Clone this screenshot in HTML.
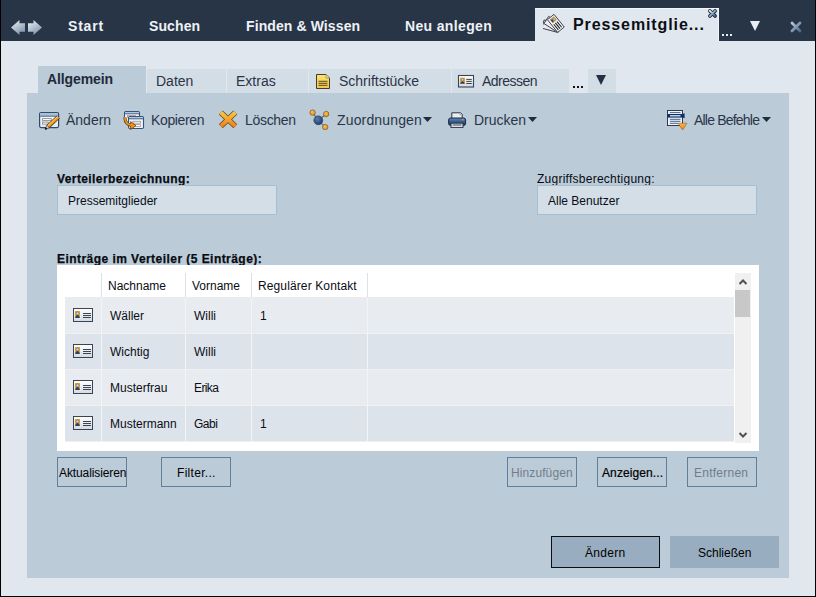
<!DOCTYPE html>
<html><head><meta charset="utf-8">
<style>
*{box-sizing:border-box;margin:0;padding:0}
html,body{width:816px;height:597px;overflow:hidden}
body{position:relative;background:#e1e7ee;font-family:"Liberation Sans",sans-serif;color:#1c2230}
.a{position:absolute;white-space:pre;line-height:1}
</style></head><body>
<div class="a" style="left:0px;top:0px;width:816px;height:41px;background:#283546;"></div>
<div class="a" style="left:0px;top:0px;width:1px;height:597px;background:#000;"></div>
<div class="a" style="left:815px;top:0px;width:1px;height:597px;background:#000;"></div>
<div class="a" style="left:0px;top:596px;width:816px;height:1px;background:#000;"></div>
<svg class="a" style="left:9px;top:18px" width="36" height="20" viewBox="0 0 36 20">
<defs><linearGradient id="ga" x1="0" y1="0" x2="0.6" y2="1"><stop offset="0" stop-color="#f2f5f9"/><stop offset="1" stop-color="#7f95ae"/></linearGradient></defs>
<path d="M2,9.5 L10.5,2 L10.5,5.2 L16,5.2 L16,13.8 L10.5,13.8 L10.5,17 Z" fill="url(#ga)"/>
<path d="M19,5.2 L24.5,5.2 L24.5,2 L33,9.5 L24.5,17 L24.5,13.8 L19,13.8 Z" fill="url(#ga)"/>
</svg>
<div class="a" style="left:68px;top:19px;font-size:14px;color:#eef2f7;font-weight:700;letter-spacing:0.8px">Start</div>
<div class="a" style="left:149px;top:19px;font-size:14px;color:#eef2f7;font-weight:700;letter-spacing:0.1px">Suchen</div>
<div class="a" style="left:246px;top:19px;font-size:14px;color:#eef2f7;font-weight:700;letter-spacing:0.1px">Finden &amp; Wissen</div>
<div class="a" style="left:405px;top:19px;font-size:14px;color:#eef2f7;font-weight:700;letter-spacing:0.35px">Neu anlegen</div>
<div class="a" style="left:535px;top:8px;width:184px;height:33px;background:#e1e7ee;border-top:1px solid #f3f6f9;border-right:1px solid #f3f6f9"></div>
<svg class="a" style="left:543px;top:12px" width="24" height="24" viewBox="0 0 24 24">
<g stroke="#3a3f48" stroke-width="0.9" stroke-linejoin="round">
<g transform="translate(14.7,20.4) rotate(-36) translate(-14.7,-20.4)"><rect x="0" y="-8.5" width="16.3" height="8.5" transform="translate(4.4,7.7) rotate(51)" fill="#e8ebef"/></g>
<g transform="translate(14.7,20.4) rotate(-18) translate(-14.7,-20.4)"><rect x="0" y="-8.5" width="16.3" height="8.5" transform="translate(4.4,7.7) rotate(51)" fill="#eceef2"/></g>
<rect x="0" y="-8.5" width="16.3" height="8.5" transform="translate(4.4,7.7) rotate(51)" fill="#f2f3f6"/>
</g>
<g transform="translate(4.4,7.7) rotate(51)">
<rect x="1.3" y="-7.2" width="5" height="5.2" fill="#f0a020"/>
<path d="M1.8,-2.2 Q2.2,-4.6 3.8,-4.6 Q5.4,-4.6 5.8,-2.2 Z" fill="#24508c"/><circle cx="3.8" cy="-5.6" r="1.2" fill="#d0dcea" stroke="#2a5aa0" stroke-width="0.5"/>
<path d="M7.5,-6.3 H14.8 M7.5,-4.2 H14.8 M7.5,-2.1 H14.8" stroke="#1e2228" stroke-width="1.05"/>
</g>
</svg>
<div class="a" style="left:573px;top:17px;font-size:16px;color:#0c0f14;font-weight:700;letter-spacing:0.9px">Pressemitglie...</div>
<svg class="a" style="left:707px;top:8px" width="11" height="11" viewBox="0 0 11 11">
<defs><linearGradient id="gx" x1="0" y1="0" x2="1" y2="1"><stop offset="0" stop-color="#f4f7fb"/><stop offset="1" stop-color="#2e5f99"/></linearGradient></defs>
<path d="M2.9,2.9 L8.1,8.1 M8.1,2.9 L2.9,8.1" stroke="#1a2230" stroke-width="3.6" stroke-linecap="round"/>
<path d="M2.9,2.9 L8.1,8.1 M8.1,2.9 L2.9,8.1" stroke="url(#gx)" stroke-width="2" stroke-linecap="round"/>
</svg>
<div class="a" style="left:722px;top:34px;width:2px;height:2px;background:#e6ecf2;"></div>
<div class="a" style="left:726px;top:34px;width:2px;height:2px;background:#e6ecf2;"></div>
<div class="a" style="left:730px;top:34px;width:2px;height:2px;background:#e6ecf2;"></div>
<svg class="a" style="left:749px;top:20px" width="12" height="12" viewBox="0 0 12 12"><path d="M1,1 L11,1 L6,11 Z" fill="#e8eef5"/></svg>
<svg class="a" style="left:789px;top:20px" width="14" height="14" viewBox="0 0 14 14">
<defs><linearGradient id="gx2" x1="0" y1="0" x2="1" y2="1"><stop offset="0" stop-color="#b8c6d6"/><stop offset="1" stop-color="#4d6c8e"/></linearGradient></defs>
<path d="M3,3 L11,11 M11,3 L3,11" stroke="url(#gx2)" stroke-width="2.8" stroke-linecap="round"/>
</svg>
<div class="a" style="left:146px;top:68px;width:81px;height:25px;background:#d3dde6;border:1px solid #e0e7ee;border-bottom:none"></div>
<div class="a" style="left:226px;top:68px;width:83px;height:25px;background:#d3dde6;border:1px solid #e0e7ee;border-bottom:none"></div>
<div class="a" style="left:308px;top:68px;width:144px;height:25px;background:#d3dde6;border:1px solid #e0e7ee;border-bottom:none"></div>
<div class="a" style="left:451px;top:68px;width:119px;height:25px;background:#d3dde6;border:1px solid #e0e7ee;border-bottom:none"></div>
<div class="a" style="left:587px;top:68px;width:30px;height:25px;background:#d3dde6;border:1px solid #e0e7ee;border-bottom:none"></div>
<div class="a" style="left:38px;top:66px;width:108px;height:27px;background:#bbcbd8;"></div>
<div class="a" style="left:47px;top:72px;font-size:14px;color:#212a3b;font-weight:700;letter-spacing:-0.1px">Allgemein</div>
<div class="a" style="left:156px;top:74px;font-size:14px;color:#2a3446">Daten</div>
<div class="a" style="left:236px;top:74px;font-size:14px;color:#2a3446">Extras</div>
<svg class="a" style="left:315px;top:73px" width="16" height="17" viewBox="0 0 16 17">
<defs><linearGradient id="gd" x1="0" y1="0" x2="0" y2="1"><stop offset="0" stop-color="#fbe36a"/><stop offset="1" stop-color="#f2c64a"/></linearGradient></defs>
<path d="M1.5,1.5 L11,1.5 L14.5,5 L14.5,15.5 L1.5,15.5 Z" fill="url(#gd)" stroke="#3d3d3d" stroke-width="1"/>
<path d="M11,1.5 L11,5 L14.5,5" fill="#e8dca0" stroke="#9a8a50" stroke-width="0.8"/>
<path d="M3.5,8.3 H12.5 M3.5,10.3 H12.5 M3.5,12.3 H12.5" stroke="#5a4a20" stroke-width="1"/>
</svg>
<div class="a" style="left:339px;top:74px;font-size:14px;color:#2a3446">Schriftstücke</div>
<svg class="a" style="left:457px;top:74px" width="18" height="14" viewBox="0 0 18 14">
<defs><linearGradient id="gct" x1="0" y1="0" x2="0" y2="1"><stop offset="0" stop-color="#ffffff"/><stop offset="1" stop-color="#d0d8e2"/></linearGradient></defs>
<rect x="1.5" y="1.5" width="15" height="11.5" fill="url(#gct)" stroke="#3a4453" stroke-width="1.1"/>
<rect x="3" y="3.7" width="5" height="6" fill="#f4a11e"/>
<path d="M3.2,9.7 Q3.6,7.2 5.5,7.2 Q7.4,7.2 7.8,9.7 Z" fill="#24456f"/><circle cx="5.5" cy="5.8" r="1.3" fill="#c9d6e4" stroke="#35557a" stroke-width="0.5"/>
<path d="M9.3,5.4 H14.8 M9.3,7.4 H14.8 M9.3,9.5 H14.8" stroke="#3a4453" stroke-width="1"/>
</svg>
<div class="a" style="left:482px;top:74px;font-size:14px;color:#2a3446;letter-spacing:-0.5px">Adressen</div>
<div class="a" style="left:573px;top:86px;width:2px;height:2px;background:#111;"></div>
<div class="a" style="left:577px;top:86px;width:2px;height:2px;background:#111;"></div>
<div class="a" style="left:581px;top:86px;width:2px;height:2px;background:#111;"></div>
<svg class="a" style="left:595px;top:74px" width="12" height="12" viewBox="0 0 12 12"><path d="M1,1 L11,1 L6,11 Z" fill="#253042"/></svg>
<div class="a" style="left:27px;top:93px;width:762px;height:485px;background:#bbcbd8;"></div>
<svg class="a" style="left:38px;top:111px" width="22" height="20" viewBox="0 0 22 20">
<defs><linearGradient id="gw" x1="0" y1="0" x2="0" y2="1"><stop offset="0" stop-color="#ffffff"/><stop offset="1" stop-color="#e4e6ee"/></linearGradient></defs>
<rect x="1.6" y="1.6" width="19" height="15" rx="1.5" fill="url(#gw)" stroke="#2d4a72" stroke-width="1.2"/>
<rect x="2.2" y="2.2" width="17.8" height="2.6" fill="#a8bfd8"/>
<path d="M2.2,5.2 H20.2" stroke="#2d4a72" stroke-width="0.9"/>
<rect x="4.6" y="7.6" width="8.6" height="2" fill="#fff" stroke="#8c8c8c" stroke-width="0.9"/>
<rect x="4.6" y="11.1" width="5.6" height="2" fill="#fff" stroke="#8c8c8c" stroke-width="0.9"/>
<path d="M10,15.6 L20.3,6" stroke="#4a3a20" stroke-width="4.2"/>
<path d="M10,15.6 L20.3,6" stroke="#f39c1f" stroke-width="2.8"/>
<path d="M9.5,14.9 L19.7,5.4" stroke="#ffd98a" stroke-width="0.9"/>
<path d="M7.2,18.3 L11.3,16.9 L8.7,14.1 Z" fill="#ddd2b8" stroke="#4a3a20" stroke-width="0.6"/>
<circle cx="7.9" cy="17.6" r="1.1" fill="#111"/>
</svg>
<div class="a" style="left:66px;top:113px;font-size:14px;color:#2b3548">Ändern</div>
<svg class="a" style="left:122px;top:109px" width="23" height="22" viewBox="0 0 23 22">
<rect x="2.5" y="2.5" width="15" height="11" rx="1.2" fill="#f6f6fa" stroke="#35557c" stroke-width="1.1"/>
<rect x="3" y="3" width="14" height="1.6" fill="#b4c6dc"/><path d="M2.5,4.8 H17.5" stroke="#35557c" stroke-width="0.9"/>
<rect x="5.5" y="6.5" width="8" height="1.8" fill="#fff" stroke="#999" stroke-width="0.8"/>
<rect x="6.5" y="7.5" width="15" height="12" rx="1.2" fill="#f2f2f6" stroke="#35557c" stroke-width="1.1"/>
<rect x="7" y="8" width="14" height="1.6" fill="#b4c6dc"/><path d="M6.5,9.8 H21.5" stroke="#35557c" stroke-width="0.9"/>
<rect x="11" y="12.3" width="7.5" height="1.8" fill="#fff" stroke="#999" stroke-width="0.8"/>
<rect x="11" y="15.6" width="7.5" height="1.8" fill="#fff" stroke="#999" stroke-width="0.8"/>
<path d="M2.8,8.3 Q3.3,15.6 9.6,16.4" fill="none" stroke="#5a3a10" stroke-width="3"/>
<path d="M8.6,12.6 L14,16.6 L8.6,20.6 Z" fill="#f0901c" stroke="#5a3a10" stroke-width="0.7"/>
<path d="M2.8,8.3 Q3.3,15.6 9.6,16.4" fill="none" stroke="#f0901c" stroke-width="1.8"/>
</svg>
<div class="a" style="left:151px;top:113px;font-size:14px;color:#2b3548;letter-spacing:-0.35px">Kopieren</div>
<svg class="a" style="left:217px;top:109px" width="22" height="21" viewBox="0 0 22 21">
<defs><linearGradient id="go" x1="0" y1="0" x2="0" y2="1"><stop offset="0" stop-color="#f8c445"/><stop offset="1" stop-color="#ee8418"/></linearGradient></defs>
<path d="M3.8,3.5 L18.3,17.2 M18.3,3.5 L3.8,17.2" stroke="#5a4428" stroke-width="5.6"/>
<path d="M3.8,3.5 L18.3,17.2 M18.3,3.5 L3.8,17.2" stroke="url(#go)" stroke-width="4.2"/>
</svg>
<div class="a" style="left:245px;top:113px;font-size:14px;color:#2b3548;letter-spacing:-0.3px">Löschen</div>
<svg class="a" style="left:308px;top:108px" width="22" height="22" viewBox="0 0 22 22">
<defs><radialGradient id="gb" cx="0.4" cy="0.35" r="0.7"><stop offset="0" stop-color="#5a80b0"/><stop offset="1" stop-color="#143868"/></radialGradient>
<radialGradient id="gor" cx="0.4" cy="0.35" r="0.7"><stop offset="0" stop-color="#ffc040"/><stop offset="1" stop-color="#ee8a18"/></radialGradient></defs>
<path d="M4.6,4.6 L10.3,12.3 L18.2,6 M10.3,12.3 L17.2,19.1" fill="none" stroke="#5f6e7c" stroke-width="1.3"/>
<circle cx="10.3" cy="12.3" r="4.4" fill="url(#gb)" stroke="#34485e" stroke-width="0.8"/>
<circle cx="4.6" cy="4.6" r="2.7" fill="url(#gor)" stroke="#6a5840" stroke-width="0.7"/>
<circle cx="18.2" cy="6" r="2.7" fill="url(#gor)" stroke="#6a5840" stroke-width="0.7"/>
<circle cx="17.2" cy="19.1" r="2.7" fill="url(#gor)" stroke="#6a5840" stroke-width="0.7"/>
</svg>
<div class="a" style="left:337px;top:113px;font-size:14px;color:#2b3548;letter-spacing:0.15px">Zuordnungen</div>
<svg class="a" style="left:423px;top:117px" width="9" height="5" viewBox="0 0 9 5"><path d="M0,0 H9 L4.5,5 Z" fill="#222c3c"/></svg>
<svg class="a" style="left:447px;top:111px" width="20" height="18" viewBox="0 0 20 18">
<defs><linearGradient id="gp" x1="0" y1="0" x2="0" y2="1"><stop offset="0" stop-color="#6488b8"/><stop offset="0.45" stop-color="#3a6098"/><stop offset="1" stop-color="#10305e"/></linearGradient></defs>
<path d="M4.8,7.5 V1.8 H13.6 L15.2,3.4 V7.5" fill="#eceef3" stroke="#2a3446" stroke-width="1"/>
<path d="M12.5,3.6 H14.8" stroke="#9aa6b8" stroke-width="1"/>
<rect x="1.6" y="7" width="17" height="7.4" rx="2" fill="url(#gp)" stroke="#1a2a40" stroke-width="1"/>
<rect x="4" y="12.2" width="12" height="4.2" fill="#f2f3f6" stroke="#2a3446" stroke-width="1"/>
<path d="M5.5,14 H14.5" stroke="#2a3446" stroke-width="1"/>
<rect x="14.6" y="8.2" width="2" height="1.1" fill="#f0a020"/>
</svg>
<div class="a" style="left:474px;top:113px;font-size:14px;color:#2b3548">Drucken</div>
<svg class="a" style="left:528px;top:117px" width="9" height="5" viewBox="0 0 9 5"><path d="M0,0 H9 L4.5,5 Z" fill="#222c3c"/></svg>
<svg class="a" style="left:666px;top:109px" width="22" height="22" viewBox="0 0 22 22">
<defs><linearGradient id="go2" x1="0" y1="0" x2="0" y2="1"><stop offset="0" stop-color="#f9b636"/><stop offset="1" stop-color="#ee8a1c"/></linearGradient></defs>
<rect x="1.5" y="1.5" width="15" height="15" fill="#f4f4f8" stroke="#2e3a4c" stroke-width="1"/>
<path d="M3.8,3.6 H14.5 M3.8,10.3 H14.5 M3.8,12.3 H14.5 M3.8,14.3 H12" stroke="#2c5288" stroke-width="0.9"/>
<rect x="2" y="5" width="15" height="3.6" fill="#0d2f6a"/>
<rect x="4" y="6.2" width="10.5" height="1.2" fill="#f2f2f6"/>
<path d="M16.5,5 L18.6,4.3 V9.3 L16.5,8.6 Z" fill="#0d2f6a"/>
<path d="M12,14.2 H21 L16.6,21 Z" fill="url(#go2)" stroke="#8a6030" stroke-width="0.6"/>
</svg>
<div class="a" style="left:694px;top:113px;font-size:14px;color:#2b3548;letter-spacing:-0.8px">Alle Befehle</div>
<svg class="a" style="left:762px;top:117px" width="9" height="5" viewBox="0 0 9 5"><path d="M0,0 H9 L4.5,5 Z" fill="#222c3c"/></svg>
<div class="a" style="left:57px;top:173px;font-size:12px;color:#080b12;font-weight:700;letter-spacing:0.4px;-webkit-text-stroke:0.25px #080b12">Verteilerbezeichnung:</div>
<div class="a" style="left:57px;top:185px;width:220px;height:30px;background:#d3dee7;border:1px solid #a9bdcc"></div>
<div class="a" style="left:68px;top:195px;font-size:12px;color:#0a0d15">Pressemitglieder</div>
<div class="a" style="left:537px;top:173px;font-size:12px;color:#080b12;letter-spacing:0.25px">Zugriffsberechtigung:</div>
<div class="a" style="left:537px;top:185px;width:220px;height:30px;background:#d3dee7;border:1px solid #a9bdcc"></div>
<div class="a" style="left:548px;top:195px;font-size:12px;color:#0a0d15">Alle Benutzer</div>
<div class="a" style="left:57px;top:253px;font-size:12px;color:#080b12;font-weight:700;letter-spacing:0.45px;-webkit-text-stroke:0.25px #080b12">Einträge im Verteiler (5 Einträge):</div>
<div class="a" style="left:57px;top:265px;width:702px;height:186px;background:#fff;"></div>
<div class="a" style="left:101px;top:273px;width:1px;height:24px;background:#dde2e8;"></div>
<div class="a" style="left:185px;top:273px;width:1px;height:24px;background:#dde2e8;"></div>
<div class="a" style="left:251px;top:273px;width:1px;height:24px;background:#dde2e8;"></div>
<div class="a" style="left:367px;top:273px;width:1px;height:24px;background:#dde2e8;"></div>
<div class="a" style="left:108px;top:280px;font-size:12px;color:#0a0d15">Nachname</div>
<div class="a" style="left:192px;top:280px;font-size:12px;color:#0a0d15">Vorname</div>
<div class="a" style="left:258px;top:280px;font-size:12px;color:#0a0d15;letter-spacing:0.12px">Regulärer Kontakt</div>
<div class="a" style="left:65px;top:297px;width:669px;height:1px;background:#ebebed;"></div>
<div class="a" style="left:65px;top:298px;width:669px;height:35px;background:#e8ecf0;"></div>
<div class="a" style="left:65px;top:333px;width:669px;height:1px;background:#eff1f1;"></div>
<div class="a" style="left:65px;top:334px;width:669px;height:35px;background:#dce3ea;"></div>
<div class="a" style="left:65px;top:369px;width:669px;height:1px;background:#eff1f1;"></div>
<div class="a" style="left:65px;top:370px;width:669px;height:35px;background:#e8ecf0;"></div>
<div class="a" style="left:65px;top:405px;width:669px;height:1px;background:#eff1f1;"></div>
<div class="a" style="left:65px;top:406px;width:669px;height:35px;background:#dce3ea;"></div>
<div class="a" style="left:65px;top:441px;width:669px;height:1px;background:#eff1f1;"></div>
<div class="a" style="left:101px;top:298px;width:1px;height:143px;background:#f2f4f6;"></div>
<div class="a" style="left:185px;top:298px;width:1px;height:143px;background:#f2f4f6;"></div>
<div class="a" style="left:251px;top:298px;width:1px;height:143px;background:#f2f4f6;"></div>
<div class="a" style="left:367px;top:298px;width:1px;height:143px;background:#f2f4f6;"></div>
<svg class="a" style="left:73px;top:308px" width="20" height="14" viewBox="0 0 20 14">
<defs><linearGradient id="gc0" x1="0" y1="0" x2="0" y2="1"><stop offset="0" stop-color="#ffffff"/><stop offset="1" stop-color="#d4dae3"/></linearGradient></defs>
<rect x="0.5" y="0.5" width="19" height="13" fill="url(#gc0)" stroke="#3a4453" stroke-width="1"/>
<rect x="2" y="3" width="5" height="7" fill="#f4a11e"/>
<path d="M2.2,10 Q2.6,7 4.5,7 Q6.4,7 6.8,10 Z" fill="#24456f"/><circle cx="4.5" cy="5.4" r="1.5" fill="#c9d6e4" stroke="#35557a" stroke-width="0.5"/>
<path d="M10,5.5 H18 M10,7.5 H18 M10,9.5 H18" stroke="#3a4453" stroke-width="1"/>
</svg>
<div class="a" style="left:110px;top:310px;font-size:12px;color:#0a0d15">Wäller</div>
<div class="a" style="left:194px;top:310px;font-size:12px;color:#0a0d15">Willi</div>
<div class="a" style="left:260px;top:310px;font-size:12px;color:#0a0d15">1</div>
<svg class="a" style="left:73px;top:344px" width="20" height="14" viewBox="0 0 20 14">
<defs><linearGradient id="gc1" x1="0" y1="0" x2="0" y2="1"><stop offset="0" stop-color="#ffffff"/><stop offset="1" stop-color="#d4dae3"/></linearGradient></defs>
<rect x="0.5" y="0.5" width="19" height="13" fill="url(#gc1)" stroke="#3a4453" stroke-width="1"/>
<rect x="2" y="3" width="5" height="7" fill="#f4a11e"/>
<path d="M2.2,10 Q2.6,7 4.5,7 Q6.4,7 6.8,10 Z" fill="#24456f"/><circle cx="4.5" cy="5.4" r="1.5" fill="#c9d6e4" stroke="#35557a" stroke-width="0.5"/>
<path d="M10,5.5 H18 M10,7.5 H18 M10,9.5 H18" stroke="#3a4453" stroke-width="1"/>
</svg>
<div class="a" style="left:110px;top:346px;font-size:12px;color:#0a0d15">Wichtig</div>
<div class="a" style="left:194px;top:346px;font-size:12px;color:#0a0d15">Willi</div>
<svg class="a" style="left:73px;top:380px" width="20" height="14" viewBox="0 0 20 14">
<defs><linearGradient id="gc2" x1="0" y1="0" x2="0" y2="1"><stop offset="0" stop-color="#ffffff"/><stop offset="1" stop-color="#d4dae3"/></linearGradient></defs>
<rect x="0.5" y="0.5" width="19" height="13" fill="url(#gc2)" stroke="#3a4453" stroke-width="1"/>
<rect x="2" y="3" width="5" height="7" fill="#f4a11e"/>
<path d="M2.2,10 Q2.6,7 4.5,7 Q6.4,7 6.8,10 Z" fill="#24456f"/><circle cx="4.5" cy="5.4" r="1.5" fill="#c9d6e4" stroke="#35557a" stroke-width="0.5"/>
<path d="M10,5.5 H18 M10,7.5 H18 M10,9.5 H18" stroke="#3a4453" stroke-width="1"/>
</svg>
<div class="a" style="left:110px;top:382px;font-size:12px;color:#0a0d15">Musterfrau</div>
<div class="a" style="left:194px;top:382px;font-size:12px;color:#0a0d15;letter-spacing:-0.6px">Erika</div>
<svg class="a" style="left:73px;top:416px" width="20" height="14" viewBox="0 0 20 14">
<defs><linearGradient id="gc3" x1="0" y1="0" x2="0" y2="1"><stop offset="0" stop-color="#ffffff"/><stop offset="1" stop-color="#d4dae3"/></linearGradient></defs>
<rect x="0.5" y="0.5" width="19" height="13" fill="url(#gc3)" stroke="#3a4453" stroke-width="1"/>
<rect x="2" y="3" width="5" height="7" fill="#f4a11e"/>
<path d="M2.2,10 Q2.6,7 4.5,7 Q6.4,7 6.8,10 Z" fill="#24456f"/><circle cx="4.5" cy="5.4" r="1.5" fill="#c9d6e4" stroke="#35557a" stroke-width="0.5"/>
<path d="M10,5.5 H18 M10,7.5 H18 M10,9.5 H18" stroke="#3a4453" stroke-width="1"/>
</svg>
<div class="a" style="left:110px;top:418px;font-size:12px;color:#0a0d15">Mustermann</div>
<div class="a" style="left:194px;top:418px;font-size:12px;color:#0a0d15;letter-spacing:-0.5px">Gabi</div>
<div class="a" style="left:260px;top:418px;font-size:12px;color:#0a0d15">1</div>
<div class="a" style="left:735px;top:273px;width:16px;height:170px;background:#f0f0f0;"></div>
<div class="a" style="left:735px;top:290px;width:15px;height:27px;background:#c8c8c8;"></div>
<svg class="a" style="left:738px;top:278px" width="10" height="8" viewBox="0 0 10 8"><path d="M1.5,6 L5,2.5 L8.5,6" fill="none" stroke="#505050" stroke-width="2"/></svg>
<svg class="a" style="left:738px;top:431px" width="10" height="8" viewBox="0 0 10 8"><path d="M1.5,2 L5,5.5 L8.5,2" fill="none" stroke="#505050" stroke-width="2"/></svg>
<div class="a" style="left:57px;top:457px;width:70px;height:30px;background:#bbcbd8;border:1px solid #5f7f9a"></div>
<div class="a" style="left:161px;top:457px;width:70px;height:30px;background:#bbcbd8;border:1px solid #5f7f9a"></div>
<div class="a" style="left:507px;top:457px;width:70px;height:30px;background:#bbcbd8;border:1px solid #5f7f9a"></div>
<div class="a" style="left:597px;top:457px;width:70px;height:30px;background:#bbcbd8;border:1px solid #5f7f9a"></div>
<div class="a" style="left:687px;top:457px;width:70px;height:30px;background:#bbcbd8;border:1px solid #5f7f9a"></div>
<div class="a" style="left:59px;top:467px;font-size:12px;color:#000000;letter-spacing:-0.1px">Aktualisieren</div>
<div class="a" style="left:177px;top:467px;font-size:12px;color:#000000;letter-spacing:0.3px">Filter...</div>
<div class="a" style="left:511px;top:467px;font-size:12px;color:#737d86;letter-spacing:0.1px">Hinzufügen</div>
<div class="a" style="left:602px;top:467px;font-size:12px;color:#000000;letter-spacing:0.1px;-webkit-text-stroke:0.2px #000">Anzeigen...</div>
<div class="a" style="left:694px;top:467px;font-size:12px;color:#737d86;letter-spacing:0.25px">Entfernen</div>
<div class="a" style="left:551px;top:536px;width:109px;height:32px;background:#98adc0;border:1px solid #0b0e14"></div>
<div class="a" style="left:585px;top:547px;font-size:12px;color:#000000;letter-spacing:0.3px">Ändern</div>
<div class="a" style="left:670px;top:536px;width:109px;height:32px;background:#98adc0;"></div>
<div class="a" style="left:698px;top:547px;font-size:12px;color:#000000">Schließen</div>
</body></html>
